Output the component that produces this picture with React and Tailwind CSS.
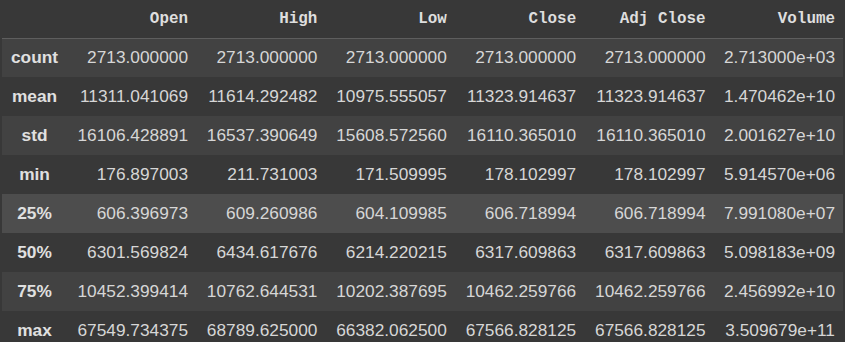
import React from "react";

const columns = ["Open", "High", "Low", "Close", "Adj Close", "Volume"];

const rows = [
  ["count", "2713.000000", "2713.000000", "2713.000000", "2713.000000", "2713.000000", "2.713000e+03"],
  ["mean", "11311.041069", "11614.292482", "10975.555057", "11323.914637", "11323.914637", "1.470462e+10"],
  ["std", "16106.428891", "16537.390649", "15608.572560", "16110.365010", "16110.365010", "2.001627e+10"],
  ["min", "176.897003", "211.731003", "171.509995", "178.102997", "178.102997", "5.914570e+06"],
  ["25%", "606.396973", "609.260986", "604.109985", "606.718994", "606.718994", "7.991080e+07"],
  ["50%", "6301.569824", "6434.617676", "6214.220215", "6317.609863", "6317.609863", "5.098183e+09"],
  ["75%", "10452.399414", "10762.644531", "10202.387695", "10462.259766", "10462.259766", "2.456992e+10"],
  ["max", "67549.734375", "68789.625000", "66382.062500", "67566.828125", "67566.828125", "3.509679e+11"],
];

export default function App() {
  return (
    <div className="w-[845px] h-[342px] overflow-hidden bg-[#383838] pl-[2px]">
      <table className="table-fixed border-collapse w-[841.4px] text-[#d6d6d6] font-['Liberation_Sans',Arial,sans-serif] text-[17.3px]">
        <colgroup>
          <col className="w-[65px]" />
          {columns.map((c) => (
            <col key={c} className="w-[129.4px]" />
          ))}
        </colgroup>
        <thead>
          <tr className="h-[38px] border-b border-[#5e5e5e]">
            <th />
            {columns.map((c) => (
              <th
                key={c}
                className="text-right pr-[8.4px] pt-[3px] font-bold text-[15.9px] text-[#dedede] font-['Liberation_Mono','Courier_New',monospace]"
              >
                {c}
              </th>
            ))}
          </tr>
        </thead>
        <tbody>
          {rows.map((r, i) => (
            <tr
              key={r[0]}
              className={`h-[39px] ${
                r[0] === "25%" ? "bg-[#4d4d4d]" : i % 2 === 0 ? "bg-[#424242]" : ""
              }`}
            >
              <th className="text-center font-bold text-[#e0e0e0]">{r[0]}</th>
              {r.slice(1).map((v, j) => (
                <td key={j} className="text-right pr-[8.4px] whitespace-nowrap">
                  {v}
                </td>
              ))}
            </tr>
          ))}
        </tbody>
      </table>
    </div>
  );
}
